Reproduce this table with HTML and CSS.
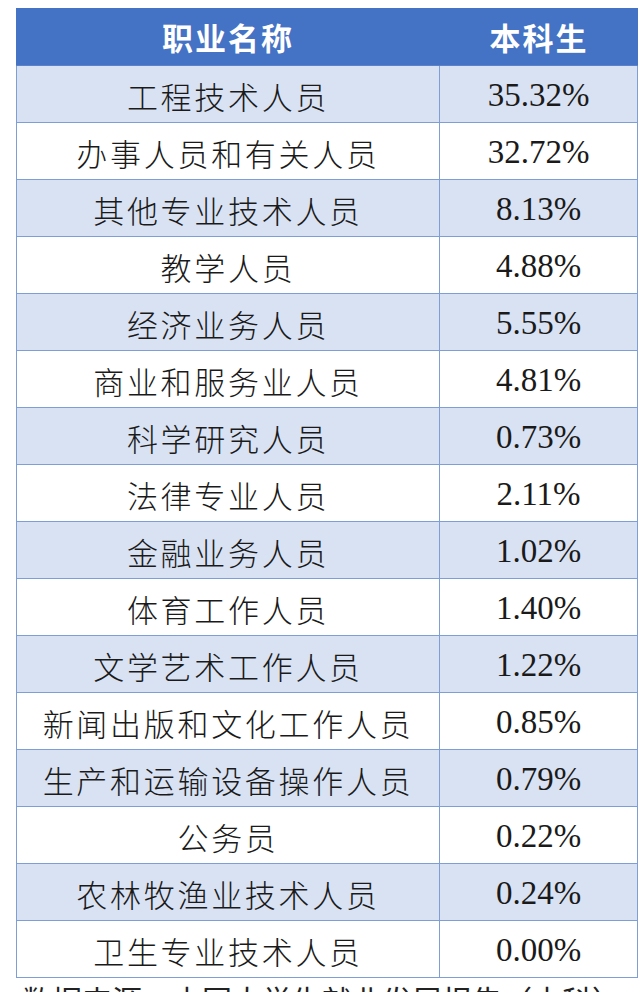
FILE: index.html
```html
<!DOCTYPE html>
<html lang="zh">
<head>
<meta charset="utf-8">
<link rel="stylesheet" href="styles.css">
</head>
<body>
<div class="table">
  <div class="row head"><div class="cell name">职业名称</div><div class="cell val">本科生</div></div>
  <div class="row alt"><div class="cell name">工程技术人员</div><div class="cell val">35.32%</div></div>
  <div class="row"><div class="cell name">办事人员和有关人员</div><div class="cell val">32.72%</div></div>
  <div class="row alt"><div class="cell name">其他专业技术人员</div><div class="cell val">8.13%</div></div>
  <div class="row"><div class="cell name">教学人员</div><div class="cell val">4.88%</div></div>
  <div class="row alt"><div class="cell name">经济业务人员</div><div class="cell val">5.55%</div></div>
  <div class="row"><div class="cell name">商业和服务业人员</div><div class="cell val">4.81%</div></div>
  <div class="row alt"><div class="cell name">科学研究人员</div><div class="cell val">0.73%</div></div>
  <div class="row"><div class="cell name">法律专业人员</div><div class="cell val">2.11%</div></div>
  <div class="row alt"><div class="cell name">金融业务人员</div><div class="cell val">1.02%</div></div>
  <div class="row"><div class="cell name">体育工作人员</div><div class="cell val">1.40%</div></div>
  <div class="row alt"><div class="cell name">文学艺术工作人员</div><div class="cell val">1.22%</div></div>
  <div class="row"><div class="cell name">新闻出版和文化工作人员</div><div class="cell val">0.85%</div></div>
  <div class="row alt"><div class="cell name">生产和运输设备操作人员</div><div class="cell val">0.79%</div></div>
  <div class="row"><div class="cell name">公务员</div><div class="cell val">0.22%</div></div>
  <div class="row alt"><div class="cell name">农林牧渔业技术人员</div><div class="cell val">0.24%</div></div>
  <div class="row"><div class="cell name">卫生专业技术人员</div><div class="cell val">0.00%</div></div>
</div>
<p class="note">数据来源：中国大学生就业发展报告（本科）</p>
</body>
</html>
```
FILE: styles.css
```css
html, body {
  margin: 0;
  padding: 0;
  background: #ffffff;
  overflow: hidden;
}
body {
  width: 640px;
  height: 992px;
}
.table {
  margin: 8px 0 0 16px;
  width: 622px;
}
.row {
  display: grid;
  grid-template-columns: 424px 198px;
  height: 57px;
  background: #ffffff;
}
.row.alt {
  background: #d9e2f3;
}
.row.head {
  height: 58px;
  background: #4472c4;
}
.cell {
  display: flex;
  align-items: center;
  justify-content: center;
  box-sizing: border-box;
  border-bottom: 1px solid #7f9ed6;
  color: #1a1a1a;
}
.row:not(.head) .cell {
  border-right: 1px solid #7f9ed6;
}
.row:not(.head) .cell.name {
  border-left: 1px solid #7f9ed6;
}
.row.head .cell {
  border-bottom: 1px solid #5b82c8;
}
.name {
  font-family: "Noto Sans CJK SC", sans-serif;
  font-weight: 300;
  font-size: 31px;
  letter-spacing: 2.7px;
  padding-top: 2px;
}
.val {
  font-family: "Liberation Serif", serif;
  font-size: 33px;
  padding-top: 2px;
}
.head .cell {
  color: #ffffff;
  font-family: "Noto Sans CJK SC", sans-serif;
  font-weight: 700;
  font-size: 31px;
  letter-spacing: 2px;
  padding-top: 0;
}
.note {
  margin: 6px 0 0 22px;
  font-family: "Noto Sans CJK SC", sans-serif;
  font-size: 30px;
  line-height: 1;
  color: #222;
  white-space: nowrap;
}
```
